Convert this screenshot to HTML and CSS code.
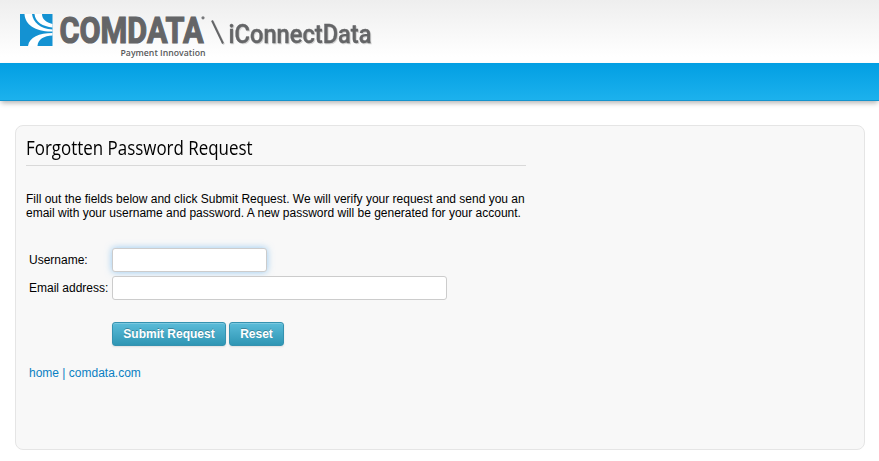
FILE: index.html
```html
<!DOCTYPE html>
<html lang="en">

<head>
    <meta charset="UTF-8">
    <title>iConnectData - Forgotten Password</title>
    <link rel="stylesheet" href="styles.css">
</head>

<body>
    <div class="header">
        <svg class="logo" width="400" height="63" viewBox="0 0 400 63">
            <rect x="20" y="14" width="32.5" height="32" fill="#1492d2"/>
            <g fill="#fff">
                <path d="M24.500 14H32C33 22 40 29 52.500 29.500V31.500C36 32 25 25 24.500 14Z"/>
                <path d="M34.500 14H42C42 19 46 22.500 52.500 24V27.500C43 26.500 35 22 34.500 14Z"/>
                <path d="M52.500 33V35.500C44 36 38 39 37.500 46H28C29.500 37 39 33 52.500 33Z"/>
            </g>
            <text class="brand" x="59.500" y="42.500" textLength="144" lengthAdjust="spacingAndGlyphs">COMDATA</text>
            <circle cx="203" cy="17.800" r="1.600" fill="#77787b"/>
            <text class="tagline" x="120.500" y="56" textLength="85" lengthAdjust="spacingAndGlyphs">Payment Innovation</text>
            <path class="slash" d="M212 20.500L223 43.500"/>
            <text class="product" x="228.500" y="42.500" textLength="143" lengthAdjust="spacingAndGlyphs">iConnectData</text>
        </svg>
    </div>
    <div class="navbar"></div>

    <div class="container">
        <div class="intro">
            <h2><span>Forgotten Password Request</span></h2>
            <p>Fill out the fields below and click Submit Request. We will verify your request and send you an email with your username and password. A new password will be generated for your account.</p>
        </div>
        <form id="forgot-form" class="form">
            <label for="username">Username:</label>
            <input type="text" id="username" class="username focused" name="username">

            <label for="email">Email address:</label>
            <input type="text" id="email" class="email" name="email">

            <div class="buttons">
                <button type="submit" class="submit">Submit Request</button>
                <button type="reset" class="reset">Reset</button>
            </div>
        </form>
        <div class="links"><a href="#">home</a> | <a href="#">comdata.com</a></div>
    </div>
</body>

</html>
```

FILE: styles.css
```css
body {
    margin: 0;
    background-color: #fff;
    color: #000;
    font-family: "Liberation Sans", Arial, sans-serif;
    font-size: 12px;
    line-height: 14px;
}

.header {
    height: 63px;
    background: linear-gradient(#eee, #fff 90%);
}

.logo {
    display: block;
}

.brand {
    font: bold 36px Roboto, sans-serif;
    fill: #646567;
    stroke: #646567;
    stroke-width: 1.2px;
}

.tagline {
    font: 600 9.5px "Open Sans", sans-serif;
    fill: #58595b;
}

.slash {
    stroke: #646567;
    stroke-width: 2;
    filter: drop-shadow(1.5px 1px 0 #d2d2d2);
}

.product {
    font: 500 25.5px Roboto, sans-serif;
    fill: #646567;
    stroke: #646567;
    stroke-width: 0.4px;
    filter: drop-shadow(1.5px 1.5px 0 #d2d2d2);
}

.navbar {
    box-sizing: border-box;
    height: 38px;
    border-bottom: 1px solid #1493cd;
    background: linear-gradient(#029fe3, #1cb1ed);
    box-shadow: 0 3px 5px -1px rgba(0, 0, 0, 0.3);
}

.container {
    box-sizing: border-box;
    height: 325px;
    margin: 24px 14px 0 15px;
    padding: 10px;
    border: 1px solid #e5e5e5;
    border-radius: 8px;
    background-color: #f8f8f8;
}

.intro {
    width: 500px;
}

h2 {
    height: 29px;
    margin: 0 0 26px;
    border-bottom: 1px solid #d9d9d9;
    font: 19.5px/23px "Open Sans", sans-serif;
    white-space: nowrap;
}

/* narrow heading face */
h2 span {
    display: inline-block;
    transform: scaleX(0.868);
    transform-origin: left;
}

p {
    margin: 0;
}

.form {
    display: grid;
    grid-template-columns: 80px 1fr;
    column-gap: 3px;
    row-gap: 4px;
    align-items: center;
    margin: 28px 0 0 3px;
}

label {
    white-space: nowrap;
}

input {
    box-sizing: border-box;
    height: 24px;
    padding: 4px;
    border: 1px solid #ccc;
    border-radius: 3px;
    background-color: #fff;
    outline: none;
}

.username {
    width: 155px;
}

.email {
    width: 335px;
}

.focused {
    box-shadow: 0 0 7px rgba(82, 168, 236, 0.6);
}

.buttons {
    display: flex;
    grid-column: 2;
    gap: 3px;
    margin-top: 18px;
}

button {
    box-sizing: border-box;
    height: 24px;
    padding: 0;
    border: 1px solid #3592b0;
    border-radius: 3px;
    background: linear-gradient(#5bbcd9, #2f96b4);
    box-shadow: inset 0 1px 0 rgba(255, 255, 255, 0.2), 0 1px 2px rgba(0, 0, 0, 0.1);
    color: #fff;
    font: bold 12px "Liberation Sans", Arial, sans-serif;
    text-shadow: 0 -1px 0 rgba(0, 0, 0, 0.25);
    cursor: pointer;
}

.submit {
    width: 114px;
}

.reset {
    width: 55px;
}

.links {
    margin: 20px 0 0 3px;
    color: #0a7fc2;
}

.links a {
    color: #0a7fc2;
    text-decoration: none;
}
```
